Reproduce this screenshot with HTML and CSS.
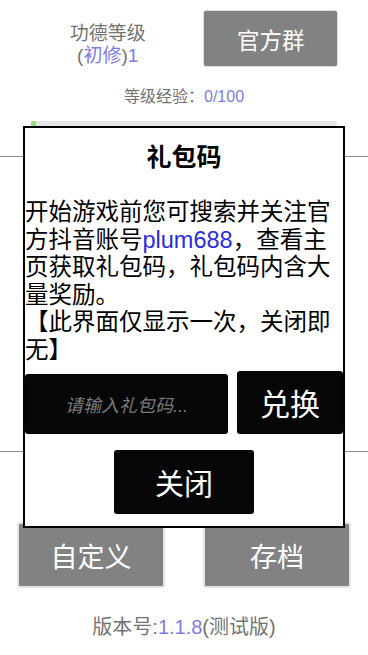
FILE: index.html
```html
<!DOCTYPE html>
<html lang="zh">
<head>
<meta charset="utf-8">
<link rel="stylesheet" href="styles.css">
</head>
<body>
<div class="page">
  <div class="top">
    <div class="level">
      <div class="level-title">功德等级</div>
      <div class="level-value">(<span class="hl">初修</span>)<span class="hl">1</span></div>
    </div>
    <div class="btn btn-group">官方群</div>
  </div>
  <div class="exp">等级经验：<span class="hl">0/100</span></div>
  <div class="bar"><div class="bar-fill" style="width:5px"></div></div>
  <div class="main"></div>
  <div class="bottom">
    <div class="btn btn-big">自定义</div>
    <div class="btn btn-big">存档</div>
  </div>
  <div class="version">版本号:<span class="hl">1.1.8</span>(测试版)</div>

  <div class="dialog">
    <div class="dialog-title">礼包码</div>
    <div class="dialog-text">
      <div class="line">开始游戏前您可搜索并关注官</div>
      <div class="line">方抖音账号<span class="blue">plum688</span>，查看主</div>
      <div class="line">页获取礼包码，礼包码内含大</div>
      <div class="line">量奖励。</div>
      <div class="line">【此界面仅显示一次，关闭即</div>
      <div class="line">无】</div>
    </div>
    <div class="code-row">
      <div class="code-input">请输入礼包码...</div>
      <div class="dark-btn redeem">兑换</div>
    </div>
    <div class="dark-btn close">关闭</div>
  </div>
</div>
</body>
</html>
```

FILE: styles.css
```css
html, body {
  margin: 0;
  padding: 0;
  background: #ffffff;
}
body {
  font-family: "Liberation Sans", "Noto Sans CJK SC", sans-serif;
  color: #737373;
}
.page {
  position: relative;
  width: 368px;
  height: 655px;
  overflow: hidden;
}
.hl { color: #7c7ce6; }
.top {
  display: flex;
  padding: 10px 30px 0 31px;
  gap: 19px;
}
.level {
  width: 154px;
  text-align: center;
  font-size: 19px;
  line-height: 22px;
  padding-top: 13px;
}
.btn {
  background: #828282;
  color: #ffffff;
  border: 1px solid #dcdcdc;
  border-radius: 3px;
  display: flex;
  align-items: center;
  justify-content: center;
  box-sizing: border-box;
}
.btn-group {
  width: 135px;
  height: 57px;
  font-size: 22.5px;
}
.exp {
  margin-top: 20px;
  text-align: center;
  font-size: 16px;
  line-height: 20px;
}
.bar {
  margin: 14px 31px 0 31px;
  height: 8px;
  background: #e7e7e7;
}
.bar-fill {
  height: 6px;
  background: #93e27a;
}
.main {
  margin-top: 27px;
  height: 294px;
  border-top: 1px solid #8a8a8a;
  border-bottom: 1px solid #8a8a8a;
}
.bottom {
  display: flex;
  justify-content: space-between;
  padding: 0 17px;
  margin-top: 70px;
}
.btn-big {
  width: 148px;
  height: 66px;
  font-size: 27px;
  border-color: #e4e4e4;
  border-width: 2px;
}
.version {
  margin-top: 27px;
  text-align: center;
  font-size: 20px;
  line-height: 24px;
}
.dialog {
  position: absolute;
  left: 23px;
  top: 126px;
  width: 318px;
  height: 398px;
  border: 2px solid #000000;
  background: #ffffff;
  color: #000000;
}
.dialog-title {
  text-align: center;
  font-weight: bold;
  font-size: 25px;
  line-height: 58px;
}
.dialog-text {
  margin-top: 13px;
  font-size: 23.5px;
}
.line {
  height: 27.6px;
  line-height: 27.6px;
  white-space: nowrap;
}
.blue { color: #2b2bdf; }
.code-row {
  display: flex;
  align-items: flex-end;
  justify-content: space-between;
  margin-top: 6px;
}
.code-input {
  width: 203px;
  height: 60px;
  background: #060606;
  border-radius: 3px;
  color: #7a7a7a;
  font-style: italic;
  font-size: 18px;
  display: flex;
  align-items: center;
  justify-content: center;
}
.dark-btn {
  background: #060606;
  color: #ffffff;
  border-radius: 3px;
  display: flex;
  align-items: center;
  justify-content: center;
}
.redeem {
  width: 106px;
  height: 63px;
  font-size: 30px;
}
.close {
  width: 140px;
  height: 64px;
  margin: 16px auto 0 auto;
  font-size: 29px;
}
```
